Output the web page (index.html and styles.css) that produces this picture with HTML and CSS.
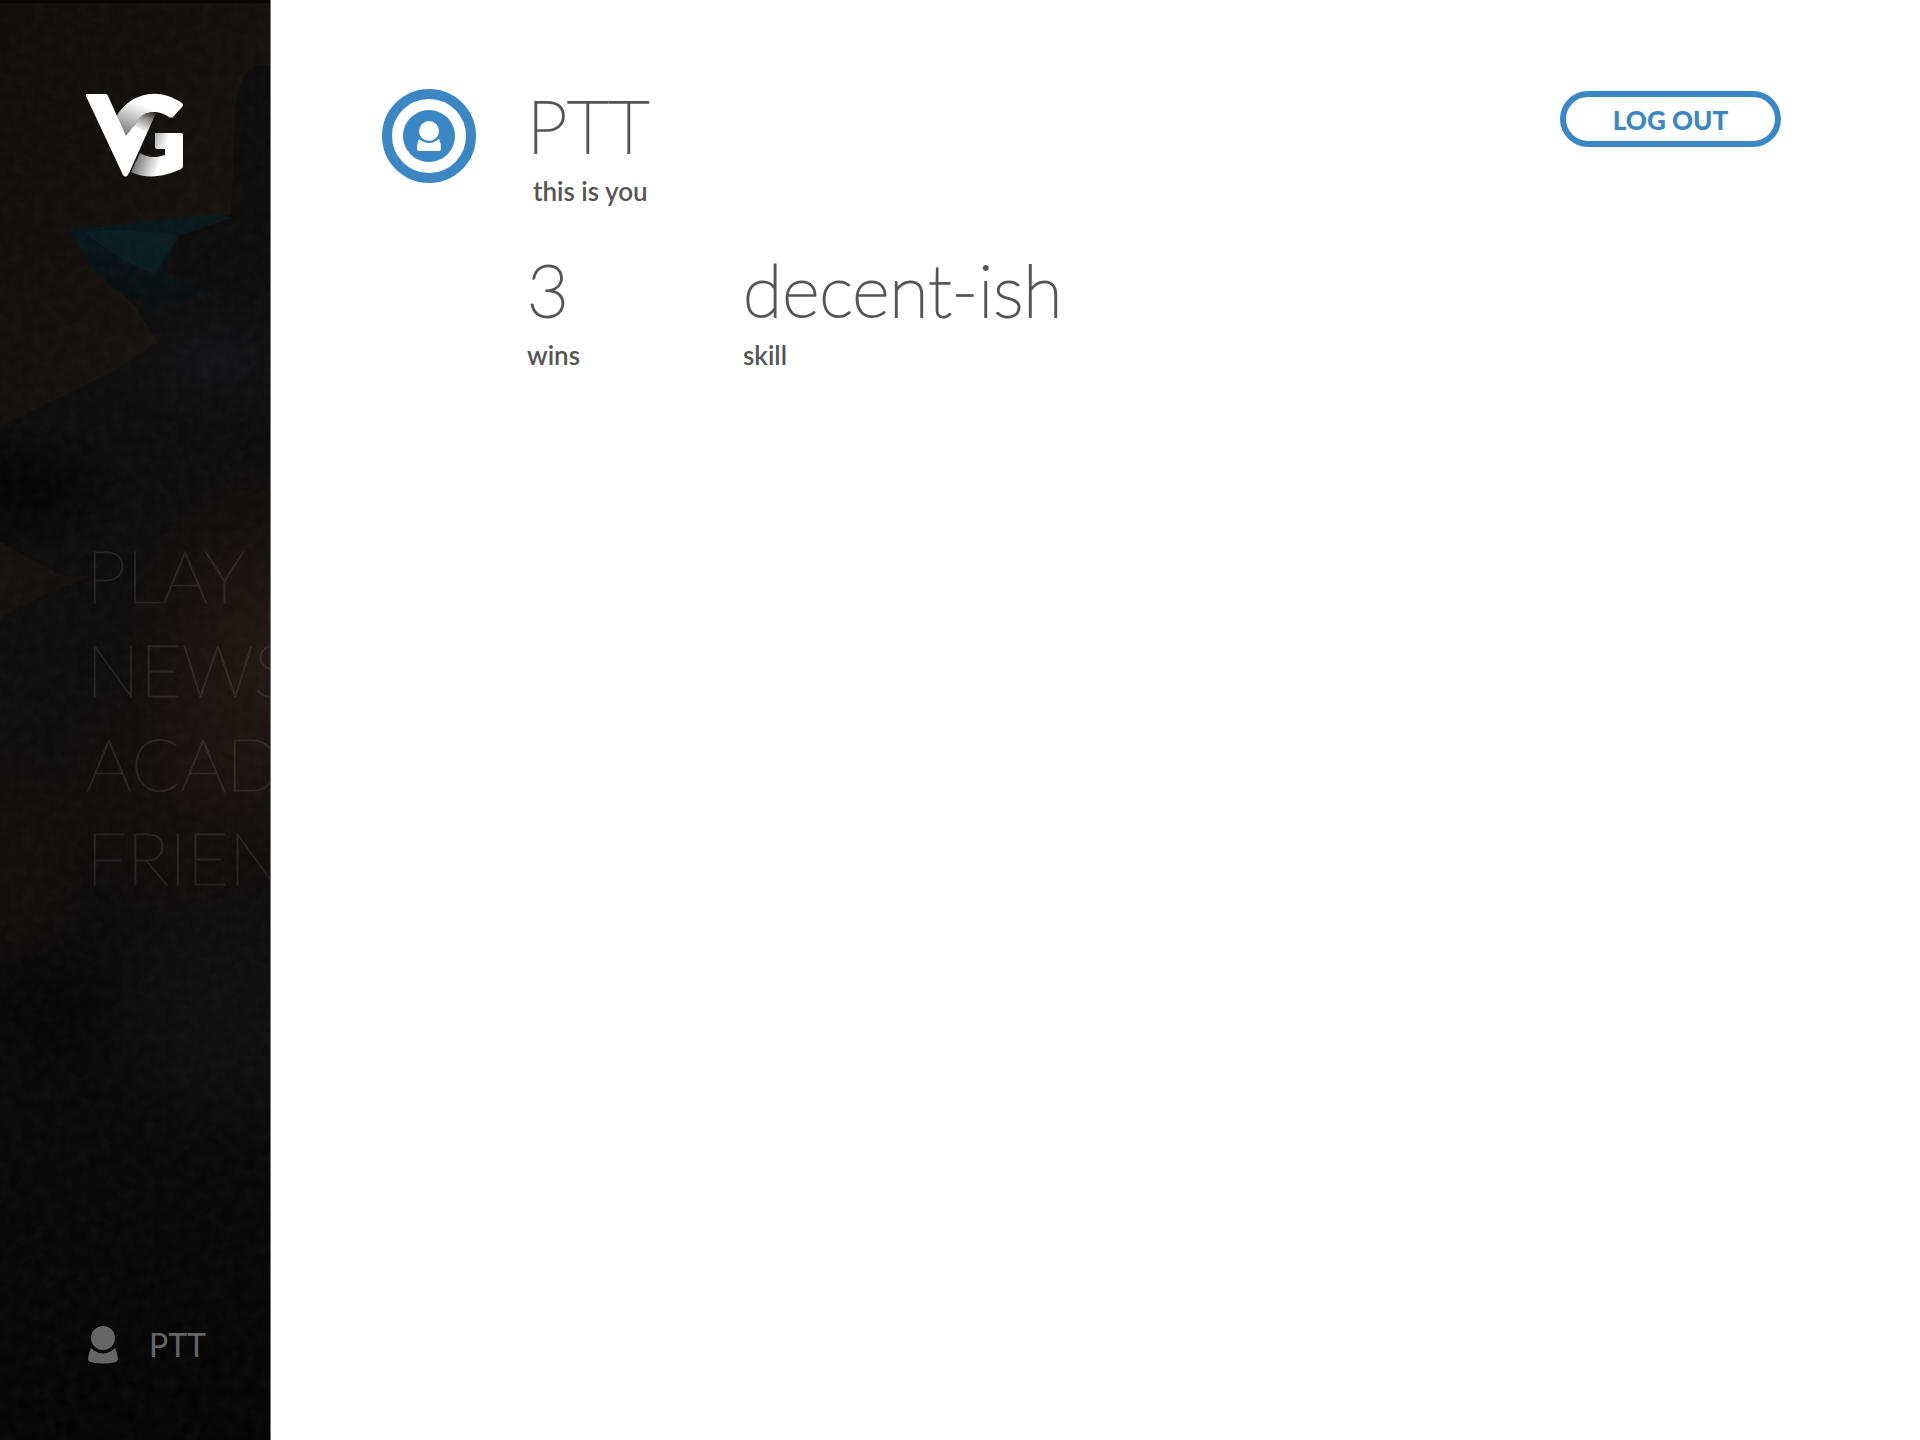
FILE: index.html
```html
<!DOCTYPE html>
<html lang="en">
<head>
    <meta charset="UTF-8">
    <meta name="viewport" content="width=device-width, initial-scale=1">
    <title>Profile</title>
    <link rel="stylesheet" href="styles.css">
</head>
<body>
    <aside class="sidebar">
        <svg class="backdrop" viewBox="0 0 270 1440" preserveAspectRatio="xMinYMin slice" aria-hidden="true">
            <defs>
                <linearGradient id="wall" x1="0" y1="0" x2="1" y2="1">
                    <stop offset="0" stop-color="#0f0d0c"/>
                    <stop offset="1" stop-color="#1a1411"/>
                </linearGradient>
                <linearGradient id="cloak" x1="0" y1="0" x2="0" y2="1">
                    <stop offset="0" stop-color="#0c0c0d"/>
                    <stop offset="0.5" stop-color="#0e0d0d"/>
                    <stop offset="1" stop-color="#060606"/>
                </linearGradient>
                <linearGradient id="teal" x1="0" y1="0" x2="0" y2="1">
                    <stop offset="0" stop-color="#08191c"/>
                    <stop offset="1" stop-color="#090d0f"/>
                </linearGradient>
                <radialGradient id="ember">
                    <stop offset="0" stop-color="#241813"/>
                    <stop offset="1" stop-color="#241813" stop-opacity="0"/>
                </radialGradient>
                <radialGradient id="mist">
                    <stop offset="0" stop-color="#17171a"/>
                    <stop offset="1" stop-color="#17171a" stop-opacity="0"/>
                </radialGradient>
                <radialGradient id="shade">
                    <stop offset="0" stop-color="#050505"/>
                    <stop offset="1" stop-color="#050505" stop-opacity="0"/>
                </radialGradient>
                <filter id="canvas" x="0" y="0" width="100%" height="100%">
                    <feTurbulence type="fractalNoise" baseFrequency="0.09" numOctaves="4" seed="4"/>
                    <feColorMatrix values="0 0 0 0 0.5  0 0 0 0 0.45  0 0 0 0 0.42  1 0 0 0 -0.3"/>
                </filter>
            </defs>
            <rect width="270" height="1440" fill="url(#cloak)"/>
            <path d="M0 0H270V66C248 60 238 80 235 110L231 215L68 230L92 268L134 305L158 342L108 374L40 407L0 426Z" fill="url(#wall)"/>
            <path d="M68 230L213 214L232 218L178 236L163 270L205 294L158 308L134 305L92 268Z" fill="url(#teal)"/>
            <path d="M85 232Q130 226 178 236L155 274Q120 262 85 232Z" fill="#0a1c1f"/>
            <ellipse cx="215" cy="360" rx="110" ry="70" fill="url(#mist)" opacity="0.7"/>
            <ellipse cx="20" cy="490" rx="110" ry="70" fill="url(#shade)"/>
            <path d="M0 542L62 576L92 576L50 592L0 618Z" fill="#151110"/>
            <ellipse cx="270" cy="660" rx="150" ry="200" fill="url(#ember)"/>
            <ellipse cx="200" cy="790" rx="150" ry="140" fill="url(#ember)" opacity="0.4"/>
            <ellipse cx="10" cy="860" rx="90" ry="120" fill="url(#ember)" opacity="0.35"/>
            <ellipse cx="230" cy="1010" rx="130" ry="150" fill="url(#mist)" opacity="0.5"/>
            <ellipse cx="50" cy="1010" rx="80" ry="80" fill="url(#shade)" opacity="0.7"/>
            <rect width="270" height="1440" filter="url(#canvas)" opacity="0.06"/>
            <rect width="270" height="3" fill="#050505"/>
        </svg>

        <a class="logo" href="#" aria-label="VG home">
            <svg viewBox="0 0 98 84" aria-hidden="true">
                <defs>
                    <linearGradient id="top" gradientUnits="userSpaceOnUse" x1="52" y1="10" x2="38" y2="42">
                        <stop offset="0" stop-color="#fff"/>
                        <stop offset="1" stop-color="#777"/>
                    </linearGradient>
                    <linearGradient id="fold" gradientUnits="userSpaceOnUse" x1="62" y1="19" x2="54" y2="38">
                        <stop offset="0" stop-color="#444"/>
                        <stop offset="0.3" stop-color="#888"/>
                        <stop offset="1" stop-color="#fff"/>
                    </linearGradient>
                    <linearGradient id="bottom" gradientUnits="userSpaceOnUse" x1="49" y1="68" x2="72" y2="76">
                        <stop offset="0" stop-color="#777"/>
                        <stop offset="1" stop-color="#fff"/>
                    </linearGradient>
                </defs>
                <path d="M30 24C42 2 70-8 96 10Q98 12 96 14L87 24Q85 25 83 24C68 14 54 20 48 34L38 48Z" fill="url(#top)"/>
                <path d="M54 60C61 65 70 65 79 62V56H71Q69 56 69 54V40H95Q97 40 97 42V73Q97 75 95 76C80 83 62 87 45 79Z" fill="url(#bottom)"/>
                <path d="M39 44L48 34C53 21 61 18 70 20L43 80L33 66Z" fill="url(#fold)"/>
                <path d="M1 1H20Q21 1 22 3L40 43L48 33L60 39L42 82Q39 85 37 82L0 3Q0 1 1 1Z" fill="#fff"/>
            </svg>
        </a>

        <nav class="menu">
            <a href="#">PLAY</a>
            <a href="#">NEWS</a>
            <a href="#">ACADEMY</a>
            <a href="#">FRIENDS</a>
        </nav>

        <a class="account" href="#">
            <svg viewBox="0 0 30 38" aria-hidden="true">
                <circle cx="15" cy="12" r="12"/>
                <path d="M3 22Q15 33 27 22Q29 26 30 33Q30 35 28 36Q15 39 2 36Q0 35 0 33Q1 26 3 22Z"/>
            </svg>
            <span>PTT</span>
        </a>
    </aside>

    <main class="profile">
        <svg class="avatar" viewBox="0 0 94 94" role="img" aria-label="Player avatar">
            <circle cx="47" cy="47" r="42" fill="#fff" stroke="#3b87c4" stroke-width="10"/>
            <circle cx="47" cy="47" r="26" fill="#3b87c4"/>
            <circle cx="47" cy="42" r="10" fill="#fff"/>
            <path d="M37 50Q47 58 57 50Q59 54 59 60Q59 62 57 62H37Q35 62 35 60Q35 54 37 50Z" fill="#fff"/>
        </svg>

        <div class="details">
            <div class="stat name">
                <h1 class="value">PTT</h1>
                <p class="label">this is you</p>
            </div>
            <div class="stats">
                <div class="stat">
                    <p class="value">3</p>
                    <p class="label">wins</p>
                </div>
                <div class="stat">
                    <p class="value">decent-ish</p>
                    <p class="label">skill</p>
                </div>
            </div>
        </div>

        <button class="logout" type="button">LOG OUT</button>
    </main>
</body>
</html>
```

FILE: styles.css
```css
* {
    box-sizing: border-box;
}
body {
    display: flex;
    min-height: 100vh;
    margin: 0;
    font-family: Lato, "Open Sans", sans-serif;
    color: #555;
    background-color: #fff;
}
h1, p {
    margin: 0;
}
a {
    color: inherit;
    text-decoration: none;
}

/* Sidebar */
.sidebar {
    position: relative;
    display: flex;
    flex-direction: column;
    flex: none;
    width: 271px;
    padding: 93px 0 75px 86px;
    overflow: hidden;
    background-color: #0b0b0b;
    border-right: 1px solid #777;
}
.backdrop {
    position: absolute;
    top: 0;
    left: 0;
    width: 100%;
    height: 100%;
}
.logo, .menu, .account {
    position: relative;
}
.logo svg {
    display: block;
    width: 98px;
    height: 84px;
}
.menu {
    display: flex;
    flex-direction: column;
    margin-top: 351px;
    font-size: 72px;
    font-weight: 100;
    line-height: 94px;
    white-space: nowrap;
    color: #fff;
    -webkit-text-stroke: 1px #fff;
    opacity: 0.09;
}
.account {
    display: flex;
    align-items: center;
    gap: 31px;
    margin-top: auto;
    padding-left: 2px;
    font-size: 32px;
    line-height: 40px;
    color: #666;
}
.account svg {
    width: 30px;
    height: 38px;
    fill: #666;
}

/* Profile */
.profile {
    display: flex;
    flex: 1;
    align-items: flex-start;
    padding: 85px 139px 84px 111px;
}
.avatar {
    flex: none;
    width: 94px;
    height: 94px;
    margin-top: 4px;
}
.details {
    display: flex;
    flex: 1;
    flex-direction: column;
    gap: 42px;
    margin-left: 51px;
}
.name .label {
    padding-left: 6px;
}
.stats {
    display: grid;
    grid-template-columns: 216px 1fr;
}
.value {
    font-size: 72px;
    font-weight: 100;
    line-height: 80px;
    -webkit-text-stroke: 2px #555;
}
.label {
    margin-top: 10px;
    font-size: 26px;
    font-weight: 600;
    line-height: 32px;
}
.logout {
    width: 221px;
    height: 56px;
    margin-top: 6px;
    padding: 2px 0 0;
    font-family: inherit;
    font-size: 26px;
    font-weight: 900;
    color: #3b87c4;
    background-color: #fff;
    border: 6px solid #3b87c4;
    border-radius: 28px;
    cursor: pointer;
}
```
